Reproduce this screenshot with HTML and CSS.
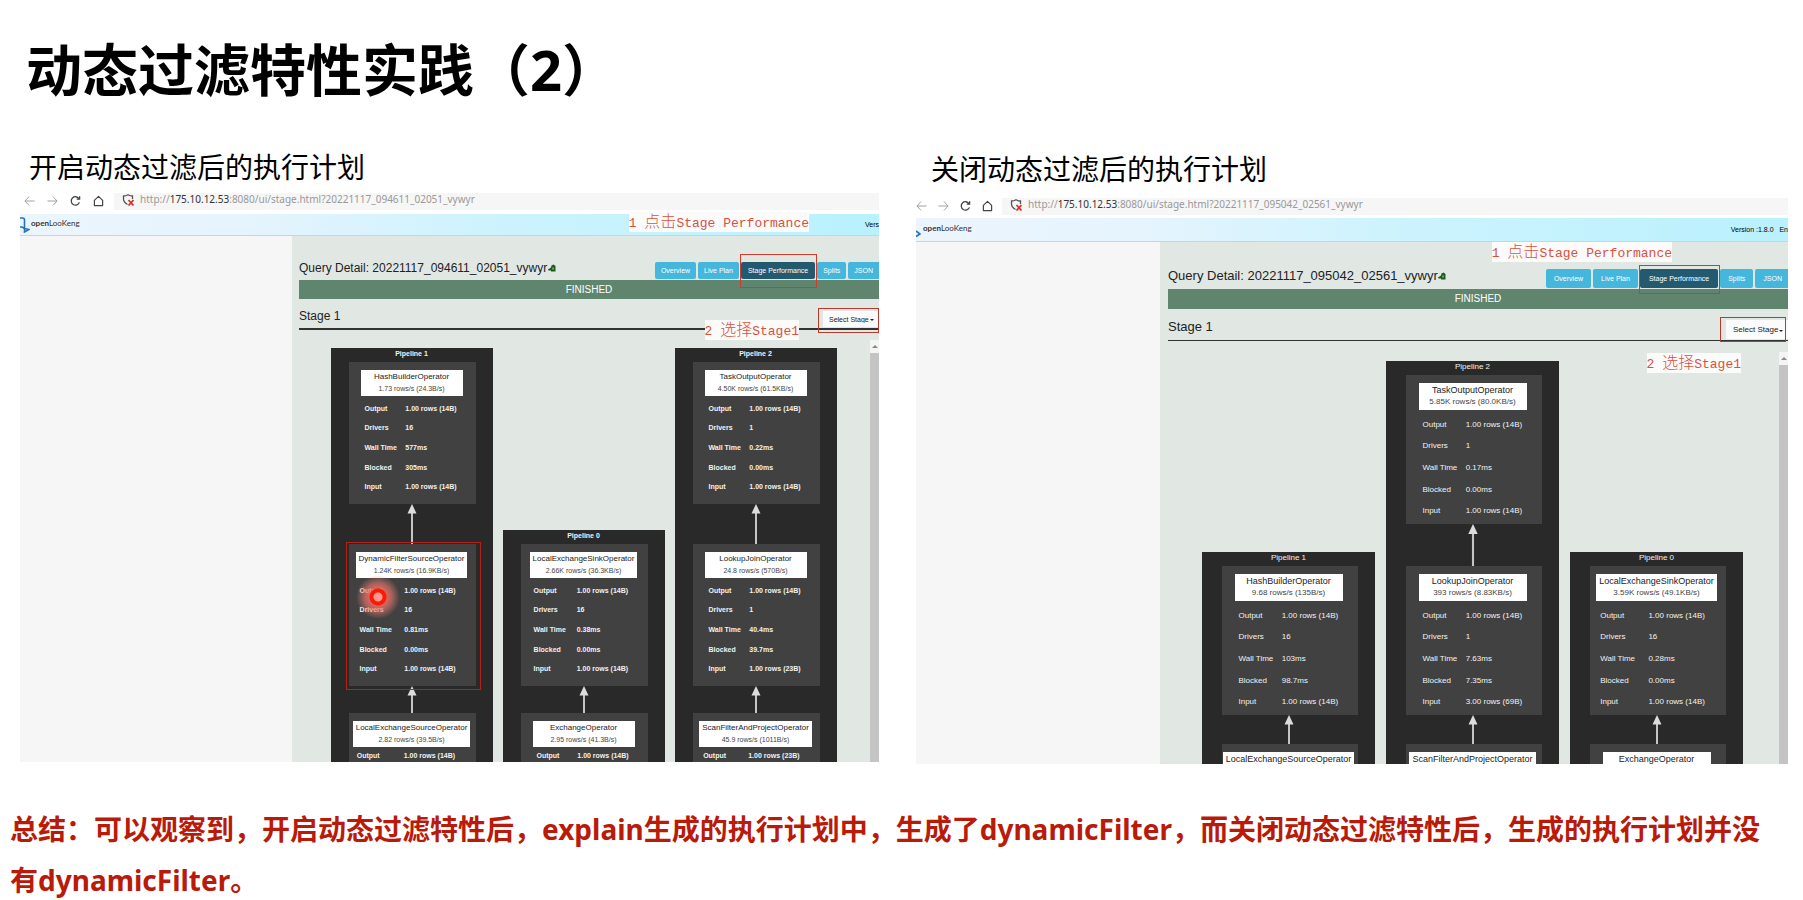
FILE: index.html
```html
<!DOCTYPE html>
<html lang="zh-CN">
<head>
<meta charset="utf-8">
<title>动态过滤特性实践（2）</title>
<link rel="stylesheet" href="styles.css">
</head>
<body>
<svg class="defs" aria-hidden="true">
  <symbol id="i-back" viewBox="0 0 12 12"><path d="M11.5 6H1M5.5 1.2 1 6l4.500 4.800" fill="none" stroke="currentColor"/></symbol>
  <symbol id="i-fwd" viewBox="0 0 12 12"><path d="M.5 6H11M6.500 1.200 11 6l-4.500 4.800" fill="none" stroke="currentColor"/></symbol>
  <symbol id="i-reload" viewBox="0 0 12 12"><path d="M10.300 7.500A4.600 4.600 0 1 1 9.800 3.400M10.500 .8v3.200H7.300" fill="none" stroke="currentColor" stroke-width="1.400"/></symbol>
  <symbol id="i-home" viewBox="0 0 12 12"><path d="M1.500 5.300 6 1l4.500 4.300V11h-9z" fill="none" stroke="currentColor" stroke-width="1.300" stroke-linejoin="round"/></symbol>
  <symbol id="i-shield" viewBox="0 0 12 12"><path d="M5.500 10.500C3 9 1.500 7.500 1.500 5V2C3.300 2 4.700 1.500 6 .7 7.300 1.500 8.700 2 10.500 2v3" fill="none" stroke="#555" stroke-width="1.300"/><path d="m6.500 6 5 5.500M11.500 6l-5 5.500" stroke="#d3302a" stroke-width="1.700"/></symbol>
  <symbol id="i-tree" viewBox="0 0 8 8"><path d="M0 5.500 3 3.500 3.500 1.500 5.500 .5 7.500 2V7.500H3V6.500H.5Z" fill="#1d5a22"/><path d="M4.300 3.500h1.500v2H4.300z" fill="#8fc15a"/></symbol>
  <symbol id="i-arrow" viewBox="0 0 10 40" preserveAspectRatio="xMidYMin slice"><path d="M5 8v60" stroke="#c4c4c4" stroke-width="2"/><path d="M5 0 9.500 9.500h-9z" fill="#dcdcdc"/></symbol>
</svg>

<h1 class="title">动态过滤特性实践（2）</h1>

<main class="compare">
  <figure class="shot shot-on">
    <figcaption>开启动态过滤后的执行计划</figcaption>
    <div class="chrome">
      <button class="nav dim" aria-label="后退"><svg><use href="#i-back"/></svg></button>
      <button class="nav dim" aria-label="前进"><svg><use href="#i-fwd"/></svg></button>
      <button class="nav" aria-label="刷新"><svg><use href="#i-reload"/></svg></button>
      <button class="nav" aria-label="主页"><svg><use href="#i-home"/></svg></button>
      <div class="address"><svg><use href="#i-shield"/></svg><span>http://<b>175.10.12.53</b>:8080/ui/stage.html?20221117_094611_02051_vywyr</span></div>
    </div>
    <header class="topbar">
      <svg class="mark" viewBox="0 0 10 16"><path d="M0 1h2.500q2 0 2 2v8M0 10h2l2.500 1.500 4.500 1-4.500 2.500v-4" fill="none" stroke="#2272b8" stroke-width="1.600"/></svg>
      <span class="brand"><b>open</b>LooKeng</span>
      <span class="version">Vers</span>
    </header>
    <div class="app">
      <aside class="side"></aside>
      <section class="detail">
        <div class="query-row">
          <h2>Query Detail: 20221117_094611_02051_vywyr <svg class="tree"><use href="#i-tree"/></svg></h2>
          <div class="tabs"><button>Overview</button><button>Live Plan</button><button class="active">Stage Performance</button><button>Splits</button><button>JSON</button></div>
        </div>
        <div class="state">FINISHED</div>
        <div class="stage-row"><h3>Stage 1</h3><label class="pick"><select aria-label="Select Stage"><option>Select Stage</option></select></label></div>
        <div class="viewport">
          <div class="canvas">
            <div class="pipeline">
              <h4>Pipeline 1</h4>
              <div class="op"><div class="fit"><p class="name">HashBuilderOperator<small>1.73 rows/s (24.3B/s)</small></p>
                <table><tr><th>Output</th><td>1.00 rows (14B)</td></tr><tr><th>Drivers</th><td>16</td></tr><tr><th>Wall Time</th><td>577ms</td></tr><tr><th>Blocked</th><td>305ms</td></tr><tr><th>Input</th><td>1.00 rows (14B)</td></tr></table></div></div>
              <svg class="link long"><use href="#i-arrow"/></svg>
              <div class="op marked"><div class="fit"><p class="name">DynamicFilterSourceOperator<small>1.24K rows/s (16.9KB/s)</small></p>
                <table><tr><th>Output</th><td>1.00 rows (14B)</td></tr><tr><th>Drivers</th><td>16</td></tr><tr><th>Wall Time</th><td>0.81ms</td></tr><tr><th>Blocked</th><td>0.00ms</td></tr><tr><th>Input</th><td>1.00 rows (14B)</td></tr></table></div><i class="laser"></i></div>
              <svg class="link"><use href="#i-arrow"/></svg>
              <div class="op cut"><div class="fit"><p class="name">LocalExchangeSourceOperator<small>2.82 rows/s (39.5B/s)</small></p>
                <table><tr><th>Output</th><td>1.00 rows (14B)</td></tr></table></div></div>
            </div>
            <div class="pipeline">
              <h4>Pipeline 0</h4>
              <div class="op"><div class="fit"><p class="name">LocalExchangeSinkOperator<small>2.66K rows/s (36.3KB/s)</small></p>
                <table><tr><th>Output</th><td>1.00 rows (14B)</td></tr><tr><th>Drivers</th><td>16</td></tr><tr><th>Wall Time</th><td>0.38ms</td></tr><tr><th>Blocked</th><td>0.00ms</td></tr><tr><th>Input</th><td>1.00 rows (14B)</td></tr></table></div></div>
              <svg class="link"><use href="#i-arrow"/></svg>
              <div class="op cut"><div class="fit"><p class="name">ExchangeOperator<small>2.95 rows/s (41.3B/s)</small></p>
                <table><tr><th>Output</th><td>1.00 rows (14B)</td></tr></table></div></div>
            </div>
            <div class="pipeline">
              <h4>Pipeline 2</h4>
              <div class="op"><div class="fit"><p class="name">TaskOutputOperator<small>4.50K rows/s (61.5KB/s)</small></p>
                <table><tr><th>Output</th><td>1.00 rows (14B)</td></tr><tr><th>Drivers</th><td>1</td></tr><tr><th>Wall Time</th><td>0.22ms</td></tr><tr><th>Blocked</th><td>0.00ms</td></tr><tr><th>Input</th><td>1.00 rows (14B)</td></tr></table></div></div>
              <svg class="link long"><use href="#i-arrow"/></svg>
              <div class="op"><div class="fit"><p class="name">LookupJoinOperator<small>24.8 rows/s (570B/s)</small></p>
                <table><tr><th>Output</th><td>1.00 rows (14B)</td></tr><tr><th>Drivers</th><td>1</td></tr><tr><th>Wall Time</th><td>40.4ms</td></tr><tr><th>Blocked</th><td>39.7ms</td></tr><tr><th>Input</th><td>1.00 rows (23B)</td></tr></table></div></div>
              <svg class="link"><use href="#i-arrow"/></svg>
              <div class="op cut"><div class="fit"><p class="name">ScanFilterAndProjectOperator<small>45.9 rows/s (1011B/s)</small></p>
                <table><tr><th>Output</th><td>1.00 rows (23B)</td></tr></table></div></div>
            </div>
          </div>
          <div class="scroll"></div>
        </div>
      </section>
    </div>
    <p class="note note-1">1 <span>点击</span>Stage Performance</p>
    <p class="note note-2">2 <span>选择</span>Stage1</p>
  </figure>

  <figure class="shot shot-off">
    <figcaption>关闭动态过滤后的执行计划</figcaption>
    <div class="chrome">
      <button class="nav dim" aria-label="后退"><svg><use href="#i-back"/></svg></button>
      <button class="nav dim" aria-label="前进"><svg><use href="#i-fwd"/></svg></button>
      <button class="nav" aria-label="刷新"><svg><use href="#i-reload"/></svg></button>
      <button class="nav" aria-label="主页"><svg><use href="#i-home"/></svg></button>
      <div class="address"><svg><use href="#i-shield"/></svg><span>http://<b>175.10.12.53</b>:8080/ui/stage.html?20221117_095042_02561_vywyr</span></div>
    </div>
    <header class="topbar">
      <svg class="mark" viewBox="0 0 5 16"><path d="M0 9 4 12 0 14.500" fill="none" stroke="#2272b8" stroke-width="1.600"/></svg>
      <span class="brand"><b>open</b>LooKeng</span>
      <span class="version">Version :1.8.0 &nbsp; En</span>
    </header>
    <div class="app">
      <aside class="side"></aside>
      <section class="detail">
        <div class="query-row">
          <h2>Query Detail: 20221117_095042_02561_vywyr <svg class="tree"><use href="#i-tree"/></svg></h2>
          <div class="tabs"><button>Overview</button><button>Live Plan</button><button class="active">Stage Performance</button><button>Splits</button><button>JSON</button></div>
        </div>
        <div class="state">FINISHED</div>
        <div class="stage-row"><h3>Stage 1</h3><label class="pick"><select aria-label="Select Stage"><option>Select Stage</option></select></label></div>
        <div class="viewport">
          <div class="canvas">
            <div class="pipeline">
              <h4>Pipeline 1</h4>
              <div class="op"><div class="fit"><p class="name">HashBuilderOperator<small>9.68 rows/s (135B/s)</small></p>
                <table><tr><th>Output</th><td>1.00 rows (14B)</td></tr><tr><th>Drivers</th><td>16</td></tr><tr><th>Wall Time</th><td>103ms</td></tr><tr><th>Blocked</th><td>98.7ms</td></tr><tr><th>Input</th><td>1.00 rows (14B)</td></tr></table></div></div>
              <svg class="link"><use href="#i-arrow"/></svg>
              <div class="op cut"><div class="fit"><p class="name">LocalExchangeSourceOperator</p></div></div>
            </div>
            <div class="pipeline">
              <h4>Pipeline 2</h4>
              <div class="op"><div class="fit"><p class="name">TaskOutputOperator<small>5.85K rows/s (80.0KB/s)</small></p>
                <table><tr><th>Output</th><td>1.00 rows (14B)</td></tr><tr><th>Drivers</th><td>1</td></tr><tr><th>Wall Time</th><td>0.17ms</td></tr><tr><th>Blocked</th><td>0.00ms</td></tr><tr><th>Input</th><td>1.00 rows (14B)</td></tr></table></div></div>
              <svg class="link long"><use href="#i-arrow"/></svg>
              <div class="op"><div class="fit"><p class="name">LookupJoinOperator<small>393 rows/s (8.83KB/s)</small></p>
                <table><tr><th>Output</th><td>1.00 rows (14B)</td></tr><tr><th>Drivers</th><td>1</td></tr><tr><th>Wall Time</th><td>7.63ms</td></tr><tr><th>Blocked</th><td>7.35ms</td></tr><tr><th>Input</th><td>3.00 rows (69B)</td></tr></table></div></div>
              <svg class="link"><use href="#i-arrow"/></svg>
              <div class="op cut"><div class="fit"><p class="name">ScanFilterAndProjectOperator</p></div></div>
            </div>
            <div class="pipeline">
              <h4>Pipeline 0</h4>
              <div class="op"><div class="fit"><p class="name">LocalExchangeSinkOperator<small>3.59K rows/s (49.1KB/s)</small></p>
                <table><tr><th>Output</th><td>1.00 rows (14B)</td></tr><tr><th>Drivers</th><td>16</td></tr><tr><th>Wall Time</th><td>0.28ms</td></tr><tr><th>Blocked</th><td>0.00ms</td></tr><tr><th>Input</th><td>1.00 rows (14B)</td></tr></table></div></div>
              <svg class="link"><use href="#i-arrow"/></svg>
              <div class="op cut"><div class="fit"><p class="name">ExchangeOperator</p></div></div>
            </div>
          </div>
          <div class="scroll"></div>
        </div>
      </section>
    </div>
    <p class="note note-1">1 <span>点击</span>Stage Performance</p>
    <p class="note note-2">2 <span>选择</span>Stage1</p>
  </figure>
</main>

<p class="summary">总结：可以观察到，开启动态过滤特性后，explain生成的执行计划中，生成了dynamicFilter，而关闭动态过滤特性后，生成的执行计划并没<br>有dynamicFilter。</p>
</body>
</html>
```

FILE: styles.css
```css
* { box-sizing: border-box; margin: 0; padding: 0; }
body { background: #fff; color: #000; font-family: "Noto Sans", "Noto Sans CJK SC", sans-serif; overflow: hidden; }
button, select { font: inherit; border: 0; background: none; }
.defs { display: none; }

.title { padding: 35px 0 2px 26px; font: 700 56px/68px "Noto Sans", "Noto Sans CJK SC", sans-serif; }

.compare { display: grid; grid-template-columns: 859fr 872fr; gap: 37px; padding: 0 15px 0 20px; align-items: start; }

/* Sizes of the two captures */
.shot { position: relative; padding-top: 36px; min-width: 0; }
.shot-on {
  --nav-gap: 12px; --nav-left: 4px; --side: 272px; --inset: 7px;
  --text: 12px; --tab-text: 7px; --tab-h: 17px; --row-h: 44px; --line: 23px; --state-h: 19px; --stage-h: 29px; --rule: 2px;
  --view-gap: 10px; --view-h: 422px; --view-pad: 8px;
  --pipe-w: 162px; --pipe-gap: 10px; --op-w: 127px; --fit-w: 102px; --name-h: 26px; --name-text: 8px; --rate-text: 7px;
  --cell-text: 7px; --cell-weight: 700; --rows-gap: 3px; --rows-h: 98px; --op-bottom: 7px; --link-h: 27px; --link-long: 40px; --cut-h: 49px; --one-row: 20px;
}
.shot-off {
  --nav-gap: 11px; --nav-left: 0px; --side: 244px; --inset: 8px;
  --text: 13px; --tab-text: 7px; --tab-h: 19px; --row-h: 47px; --line: 26px; --state-h: 20px; --stage-h: 31px; --rule: 1px;
  --view-gap: 11px; --view-h: 412px; --view-pad: 9px;
  --pipe-w: 173px; --pipe-gap: 11px; --op-w: 136px; --fit-w: 108px; --name-h: 27px; --name-text: 9px; --rate-text: 8px;
  --cell-text: 8px; --cell-weight: 400; --rows-gap: 4px; --rows-h: 108px; --op-bottom: 2px; --link-h: 29px; --link-long: 42px; --cut-h: 40px; --one-row: 20px;
}
figcaption { padding: 0 0 2px 9px; font: 28px/50px "Noto Sans CJK SC", sans-serif; }
.shot-off { padding-top: 38px; }
.shot-off figcaption { padding: 0 0 5px 15px; }

.chrome { display: flex; align-items: center; gap: var(--nav-gap); padding: 0 0 2px var(--nav-left); height: 17px; margin-bottom: 4px; color: #444; }
.shot-off .chrome { margin-bottom: 3px; }
.nav { width: 11px; height: 12px; color: #444; flex: none; }
.nav svg { display: block; width: 11px; height: 12px; }
.dim { color: #999; }
.address { display: flex; align-items: center; gap: 6px; flex: 1; height: 17px; margin: 0 0 -2px -2px; padding: 0 0 4px 8px; background: #f6f6f6; color: #999; font: 10px/13px "Noto Sans", sans-serif; white-space: nowrap; overflow: hidden; }
.address svg { width: 12px; height: 12px; flex: none; }
.address b { font-weight: 400; color: #333; }

.topbar { display: flex; align-items: center; height: 22px; gap: 1px; overflow: hidden; background: linear-gradient(90deg, #ecf5fe 0, #e6f4fd 25%, #cdf3fd 55%, #b9f1fe 100%); border-bottom: 1px solid #c9d5da; font: 7px/20px "Liberation Sans", sans-serif; }
.shot-off .topbar { height: 24px; gap: 2px; }
.mark { width: 10px; height: 16px; flex: none; }
.shot-off .mark { width: 5px; }
.brand { padding-bottom: 3px; font: 8px/16px "Lato", sans-serif; color: #333; }
.version { margin-left: auto; white-space: nowrap; }

.app { display: flex; }
.side { flex: 0 0 var(--side); background: #f6f6f6; }
.detail { flex: 1; min-width: 0; padding-left: var(--inset); background: #e1e8e4; color: #222; font-family: "Liberation Sans", Arial, sans-serif; }
.query-row, .stage-row { display: flex; justify-content: space-between; align-items: flex-end; }
.query-row { height: var(--row-h); }
h2, h3 { font-weight: 400; font-size: var(--text); line-height: var(--line); white-space: nowrap; }
.tree { width: 8px; height: 8px; margin-left: -3px; }
.tabs { display: flex; gap: 2px; padding-bottom: 1px; }
.tabs button { position: relative; height: var(--tab-h); padding: 0 6px; border-radius: 2px; background: #45b6dc; color: #fff; font-size: var(--tab-text); white-space: nowrap; }
.shot-off .tabs button { padding: 0 8px; }
.tabs button:last-child { padding-right: 6px; border-radius: 2px 0 0 2px; }
.shot-off .tabs button:last-child { padding-right: 6px; }
.tabs .active { background: #245a70; padding: 0 7px; }
.shot-off .tabs .active { padding: 0 9px; }
.active::after { content: ""; position: absolute; inset: -8px -2px -9px -1px; border: 1px solid #cf3c2c; }
.shot-off .active::after { inset: -4px -2px -6px -1px; }
.state { height: var(--state-h); background: #5f856f; color: #fff; font-size: 10px; line-height: var(--state-h); text-align: center; }
.stage-row { height: calc(var(--stage-h) + var(--rule)); border-bottom: var(--rule) solid #333; }
.pick { position: relative; margin-bottom: 1px; background: #fafbfa; }
.pick select { appearance: none; display: block; width: 56px; height: 16px; padding-left: 6px; font-size: 7px; color: #222; }
.shot-off .pick select { width: 62px; height: 19px; padding-left: 7px; font-size: 8px; }
.pick::before { content: ""; position: absolute; right: 5px; top: 50%; border: 2px solid transparent; border-top-color: #222; border-bottom: 0; }
.pick::after { content: ""; position: absolute; inset: -3px 0 -6px -5px; border: 1px solid #b73a2c; pointer-events: none; }
.shot-off .pick::after { inset: -3px 2px -3px -6px; }

.viewport { display: flex; height: var(--view-h); margin-top: var(--view-gap); overflow: hidden; }
.canvas { flex: 1; display: flex; justify-content: center; align-items: flex-end; align-self: flex-start; gap: var(--pipe-gap); padding: var(--view-pad) 2px 0 0; }
.scroll { width: 9px; background: linear-gradient(#f4f4f4 13px, #c4c4c4 13px); position: relative; }
.scroll::before { content: ""; position: absolute; left: 2px; top: 5px; border: 3px solid transparent; border-bottom-color: #888; border-top: 0; }

.pipeline { display: flex; flex-direction: column; align-items: center; width: var(--pipe-w); background: #292929; color: #f2f2f2; }
h4 { font-size: var(--cell-text); font-weight: var(--cell-weight); line-height: 12px; padding-bottom: 2px; }
.op { position: relative; display: flex; justify-content: center; width: var(--op-w); margin-left: 2px; padding: 8px 2px var(--op-bottom) 0; background: #414141; }
.fit { min-width: var(--fit-w); }
.name { display: flex; flex-direction: column; height: var(--name-h); padding: 1px 3px; background: #fff; color: #222; font-size: var(--name-text); line-height: 12px; text-align: center; white-space: nowrap; }
.name small { color: #444; font-size: var(--rate-text); line-height: 12px; }
.op table { width: 100%; height: var(--rows-h); margin-top: var(--rows-gap); border-collapse: collapse; font-size: var(--cell-text); line-height: 10px; white-space: nowrap; }
.op th { width: 40%; padding-left: 4px; text-align: left; }
.op th, .op td { font-weight: var(--cell-weight); }
.op td { padding-left: 4px; }
.cut { height: var(--cut-h); padding-bottom: 0; overflow: hidden; }
.cut table { height: var(--one-row); margin-top: 1px; line-height: 8px; }
.cut th, .cut td { padding-bottom: 4px; }
.link { width: 10px; height: var(--link-h); }
.link.long { height: var(--link-long); }
.marked::after { content: ""; position: absolute; inset: -2px -5px -4px -3px; border: 1px solid #b5201a; }
.laser { position: absolute; left: 7px; top: 31px; width: 44px; height: 44px; border-radius: 50%; background: radial-gradient(circle, #ff9a8c 0 4px, #fb1a08 5px 8px, rgba(240, 110, 100, .85) 9px, rgba(230, 120, 110, .6) 14px, rgba(220, 110, 100, 0) 22px); }

.note { position: absolute; background: #fbfbfa; color: #d9503f; font: 13px/16px "Liberation Mono", "Noto Sans CJK SC", monospace; white-space: nowrap; }
.note span { font-size: 16px; font-family: "Noto Sans CJK SC", sans-serif; font-weight: 300; line-height: 16px; }
.note-1 { right: 70px; top: 107px; }
.note-2 { right: 80px; top: 215px; }
.shot-off .note-1 { right: 116px; top: 137px; }
.shot-off .note-2 { right: 47px; top: 248px; }

.summary { padding: 40px 0 0 10px; color: #b91a0a; font: 700 28px/51px "Noto Sans", "Noto Sans CJK SC", sans-serif; white-space: nowrap; }
```
